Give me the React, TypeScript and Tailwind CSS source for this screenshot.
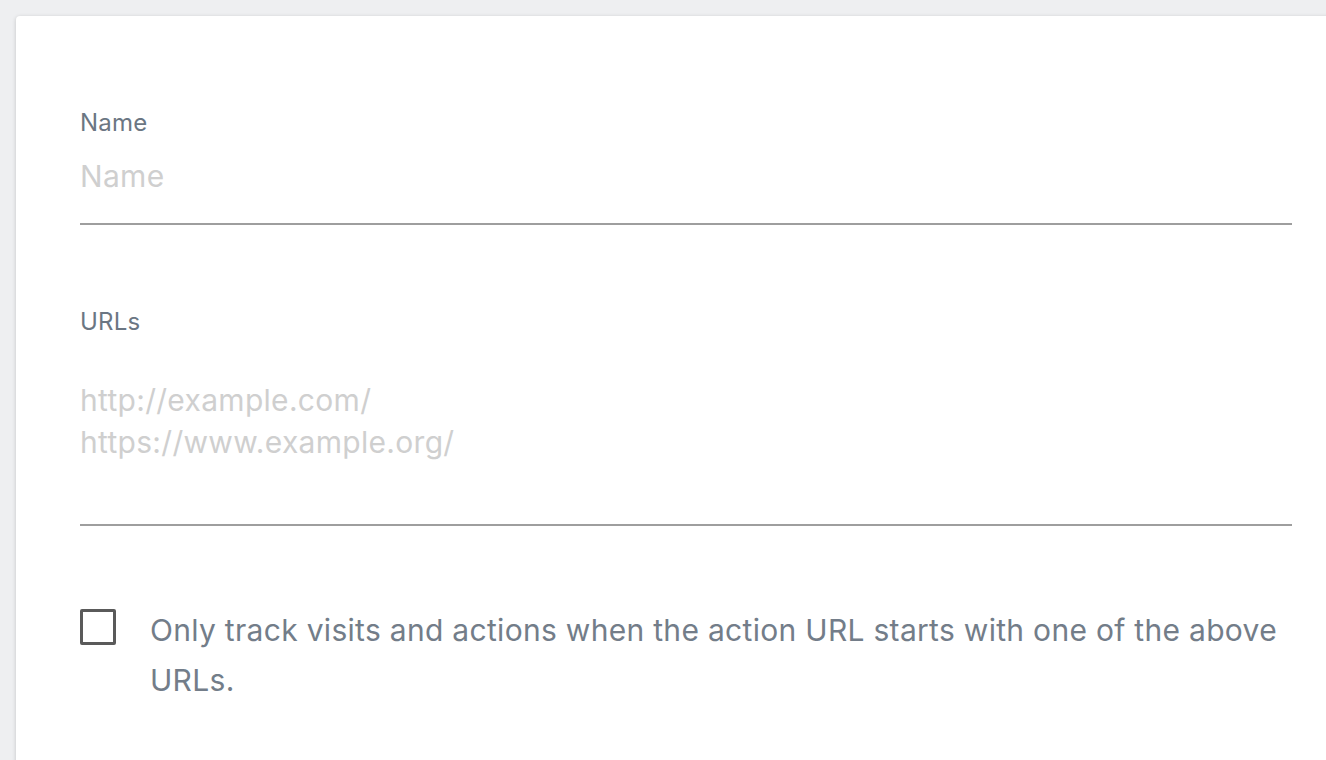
import { useState } from "react";

export default function App() {
  const [name, setName] = useState("");
  const [urls, setUrls] = useState("");
  const [onlyTrack, setOnlyTrack] = useState(false);

  return (
    <div
      className="h-[760px] w-[1326px] overflow-hidden bg-[#eeeff1] pl-4 pt-4"
      style={{ fontFamily: "Inter, 'Liberation Sans', sans-serif" }}
    >
      <div className="h-[800px] w-[1360px] rounded-tl-[4px] bg-white px-16 pt-[93px] shadow-[0_1px_4px_rgba(0,0,0,0.18)]">
        <div className="w-[1212px]">
          <label className="block text-[24px] leading-[28px] tracking-[0.2px] text-[#6b7683]">Name</label>
          <input
            value={name}
            onChange={(e) => setName(e.target.value)}
            placeholder="Name"
            className="block h-[88px] w-full border-b-2 border-[#9e9e9e] bg-transparent pb-[8px] text-[30px] tracking-[0.3px] text-[#333] outline-none placeholder:text-[#cfcfcf]"
          />

          <label className="mt-[83px] block text-[24px] leading-[28px] tracking-[0.2px] text-[#6b7683]">URLs</label>
          <textarea
            value={urls}
            onChange={(e) => setUrls(e.target.value)}
            placeholder={"http://example.com/\nhttps://www.example.org/"}
            rows={3}
            className="mt-[43px] block h-[147px] w-full resize-none border-b-2 border-[#9e9e9e] bg-transparent text-[30px] leading-[42px] tracking-[0.3px] text-[#333] outline-none placeholder:text-[#cfcfcf]"
          />

          <label className="mt-[79px] flex cursor-pointer items-start gap-[34px]">
            <input
              type="checkbox"
              checked={onlyTrack}
              onChange={(e) => setOnlyTrack(e.target.checked)}
              className="sr-only"
            />
            <span className="mt-[4px] block h-[36px] w-[36px] shrink-0 rounded-[2px] border-[3px] border-[#5a5a5a]" />
            <span className="text-[30px] leading-[50px] tracking-[0.3px] text-[#737d89]">
              Only track visits and actions when the action URL starts with one of the above URLs.
            </span>
          </label>
        </div>
      </div>
    </div>
  );
}
